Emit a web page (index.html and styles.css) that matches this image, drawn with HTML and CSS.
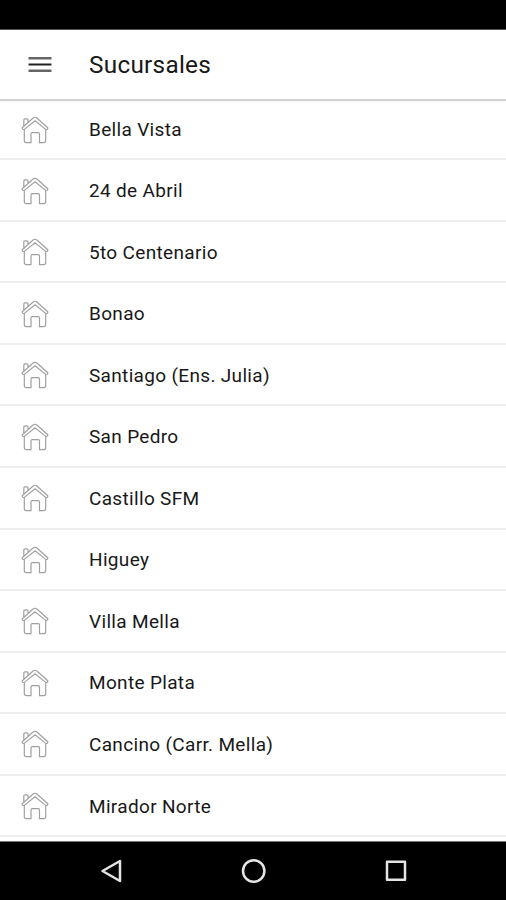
FILE: index.html
```html
<!DOCTYPE html>
<html lang="es">
<head>
<meta charset="utf-8">
<title>Sucursales</title>
<link rel="stylesheet" href="styles.css">
</head>
<body>
<div class="status"></div>
<header class="bar">
<svg class="menu" viewBox="0 0 24 18"><path class="soft" d="M0.5 2.2h23M0.5 14.7h23"/><path d="M0.5 8.5h23"/></svg>
<h1>Sucursales</h1>
</header>
<svg class="defs"><symbol id="home" viewBox="0 0 28 28"><path d="M1.5 11.5 11.8 2.2Q14 .3 16.2 2.2L26.5 11.5Q27.2 12.3 26.2 13.3 25.2 13.8 24.4 13.1L14 4.7 3.6 13.1Q2.8 13.8 1.8 13.3 .8 12.3 1.5 11.5ZM2.8 10.3V4Q2.8 2.8 4 2.8H6Q7 2.8 7 4V6.5M3.3 13V24.5Q3.3 26.6 5.5 26.6H10V17.9Q10 16.7 11.2 16.7H17.3Q18.5 16.7 18.5 17.9V26.6H22.7Q24.7 26.6 24.7 24.5V13"/></symbol></svg>
<ul class="list">
<li><svg><use href="#home"/></svg><span>Bella Vista</span></li>
<li><svg><use href="#home"/></svg><span>24 de Abril</span></li>
<li><svg><use href="#home"/></svg><span>5to Centenario</span></li>
<li><svg><use href="#home"/></svg><span>Bonao</span></li>
<li><svg><use href="#home"/></svg><span>Santiago (Ens. Julia)</span></li>
<li><svg><use href="#home"/></svg><span>San Pedro</span></li>
<li><svg><use href="#home"/></svg><span>Castillo SFM</span></li>
<li><svg><use href="#home"/></svg><span>Higuey</span></li>
<li><svg><use href="#home"/></svg><span>Villa Mella</span></li>
<li><svg><use href="#home"/></svg><span>Monte Plata</span></li>
<li><svg><use href="#home"/></svg><span>Cancino (Carr. Mella)</span></li>
<li><svg><use href="#home"/></svg><span>Mirador Norte</span></li>
</ul>
<nav class="nav">
<svg viewBox="0 0 28 28"><path d="M22 4V24L4.5 14Z"/></svg>
<svg viewBox="0 0 28 28"><circle cx="13.7" cy="14" r="10.7"/></svg>
<svg viewBox="0 0 28 28"><rect x="5" y="4.8" width="18" height="18"/></svg>
</nav>
</body>
</html>
```
FILE: styles.css
```css
* { box-sizing: border-box; }
body { margin: 0; height: 900px; overflow: hidden; display: flex; flex-direction: column; font-family: Roboto, sans-serif; color: #181818; background: #fff; }
.status { height: 30px; background: #000; border-bottom: 1px solid #555; flex: none; }
.bar { height: 71px; flex: none; display: flex; align-items: center; padding-left: 28px; border-bottom: 2px solid #d2d2d2; box-shadow: 0 1px 3px #0000000c; }
.menu { width: 24px; height: 18px; margin-right: 37px; fill: none; stroke: #222; stroke-width: 2; }
.menu .soft { stroke: #666; stroke-width: 2.6; }
h1 { margin: 0; font-size: 24.3px; font-weight: 400; letter-spacing: 0.28px; }
.defs { display: none; }
.list { list-style: none; margin: 0; padding: 0; height: 740px; flex: none; overflow: hidden; }
.list li { height: 61.55px; display: flex; align-items: center; padding-left: 21px; border-bottom: 2px solid #eee; }
.list li:first-child { height: 59.3px; }
.list svg { width: 28px; height: 28px; margin: 1px 40px 0 0; fill: none; stroke: #a0a0a0; stroke-width: 1.2; }
.list span { font-size: 19px; letter-spacing: 0.33px; margin-top: 1px; }
.list li:first-child span { margin-top: 0; }
.nav { flex: 1; background: #000; border-top: 1px solid #777; display: flex; align-items: center; padding-left: 98px; gap: 114px; }
.nav svg { width: 28px; height: 28px; fill: none; stroke: #e4e4e4; stroke-width: 2.5; stroke-linejoin: round; }
```
